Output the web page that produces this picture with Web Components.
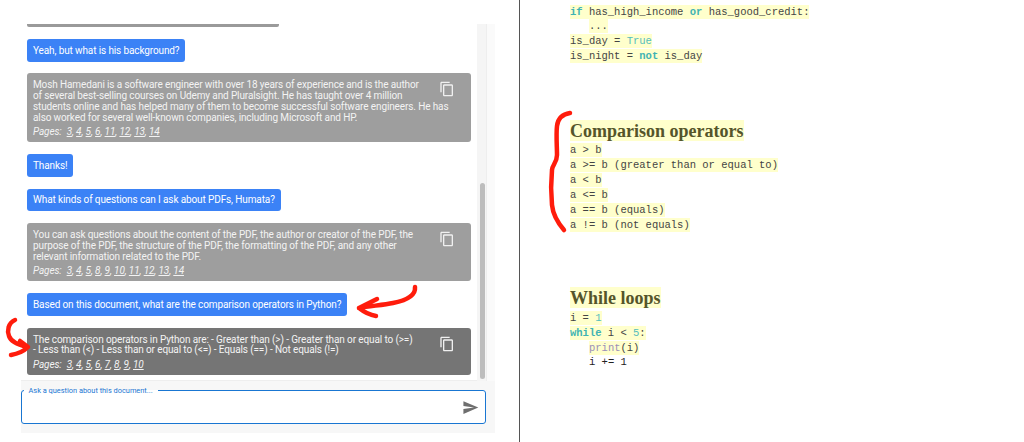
<!DOCTYPE html>
<html><head><meta charset="utf-8">
<style>
html,body{margin:0;padding:0;background:#fff;height:442px;overflow:hidden}
body{display:flex;position:relative;font-family:Roboto,"Liberation Sans",Arial,sans-serif}
</style></head><body>
<chat-pane>
  <chat-msg kind="user">Yeah, but what is his background?</chat-msg>
  <chat-msg kind="bot" pages="3,4,5,6,11,12,13,14">Mosh Hamedani is a software engineer with over 18 years of experience and is the author<br>of several best-selling courses on Udemy and Pluralsight. He has taught over 4 million<br>students online and has helped many of them to become successful software engineers. He has<br>also worked for several well-known companies, including Microsoft and HP.</chat-msg>
  <chat-msg kind="user">Thanks!</chat-msg>
  <chat-msg kind="user">What kinds of questions can I ask about PDFs, Humata?</chat-msg>
  <chat-msg kind="bot" pages="3,4,5,8,9,10,11,12,13,14">You can ask questions about the content of the PDF, the author or creator of the PDF, the<br>purpose of the PDF, the structure of the PDF, the formatting of the PDF, and any other<br>relevant information related to the PDF.</chat-msg>
  <chat-msg kind="user">Based on this document, what are the comparison operators in Python?</chat-msg>
  <chat-msg kind="bot" active pages="3,4,5,6,7,8,9,10">The comparison operators in Python are: - Greater than (&gt;) - Greater than or equal to (&gt;=)<br>- Less than (&lt;) - Less than or equal to (&lt;=) - Equals (==) - Not equals (!=)</chat-msg>
</chat-pane>
<doc-pane>
  <code-block style="margin-top:4.5px">
    <code-line><b class="k">if</b> has_high_income <b class="k">or</b> has_good_credit:</code-line>
    <code-line indent>...</code-line>
    <code-line>is_day = <span class="t">True</span></code-line>
    <code-line>is_night = <b class="k">not</b> is_day</code-line>
  </code-block>
  <doc-heading style="margin-top:56px">Comparison operators</doc-heading>
  <code-block style="margin-top:1.5px">
    <code-line>a &gt; b</code-line>
    <code-line>a &gt;= b (greater than or equal to)</code-line>
    <code-line>a &lt; b</code-line>
    <code-line>a &lt;= b</code-line>
    <code-line>a == b (equals)</code-line>
    <code-line>a != b (not equals)</code-line>
  </code-block>
  <doc-heading style="margin-top:55px">While loops</doc-heading>
  <code-block style="margin-top:1.5px">
    <code-line>i = <span class="t">1</span></code-line>
    <code-line><b class="k">while</b> i &lt; <span class="t">5</span>:</code-line>
    <code-line indent><span class="p">print</span>(i)</code-line>
    <code-line indent plain>i += 1</code-line>
  </code-block>
</doc-pane>
<red-ink></red-ink>
<script>
function def(name, css, html, init){
  customElements.define(name, class extends HTMLElement{
    connectedCallback(){
      if(this.shadowRoot) return;
      const s=this.attachShadow({mode:'open'});
      s.innerHTML='<style>'+css+'</style>'+(typeof html==='function'?html(this):html);
      if(init) init(this,s);
    }
  });
}
def('chat-pane',`
  :host{display:flex;flex-direction:column;box-sizing:border-box;width:520px;height:442px;flex:none;border-right:1px solid #555;padding:24px 24px 0 21px;border-top:0}
  .top{display:flex;height:357px}
  .msgs{width:456px;box-sizing:border-box;padding-left:6px;overflow:hidden;border-bottom:1px solid #eee}
  .stub{width:252px;height:2.5px;background:#9a9a9a;border-radius:0 0 2px 2px;margin-bottom:12.5px}
  .bar{width:18px;display:flex;background:#fafafa}
  .track{width:10px;background:#f5f5f5;box-sizing:border-box;padding:159px 0 2px 3px;border-right:1px solid #eee}
  .thumb{width:5px;height:196px;background:#bdbdbd;border-radius:3px}
  .foot{background:#f7f7f7;height:52px;width:474px;box-sizing:border-box;padding:5px 9px 0 0}
`,`<div class="top"><div class="msgs"><div class="stub"></div><slot></slot></div><div class="bar"><div class="track"><div class="thumb"></div></div></div></div>
<div class="foot"><ask-box></ask-box></div>`);
def('chat-msg',`
  :host{display:block;margin-bottom:11.9px;font:10px/10.75px Roboto,"Liberation Sans",Arial,sans-serif;letter-spacing:-.12px;color:#f3f3f3}
  .b{box-sizing:border-box;border-radius:3px;padding:6px}
  .user{display:inline-block;vertical-align:top;background:#3b82f6;color:#fff;padding:6.6px 6px 5.2px}
  .bot{display:flex;width:444px;background:#9e9e9e;padding:7px 6px 4px;position:relative}
  .active{background:#757575}
  .t{flex:1;white-space:nowrap}
  .pg{font-style:italic;line-height:13px;margin-top:2px;display:flex;gap:5px}
  u{text-underline-offset:1px}
  svg{width:16px;height:16px;fill:#f0f0f0;position:absolute;left:411.7px;top:8px}
`,h=>{
  const bot=h.getAttribute('kind')==='bot';
  if(!bot) return '<div class="b user"><slot></slot></div>';
  const pages=h.getAttribute('pages').split(',');
  const links=pages.map((p,i)=>'<u>'+p+'</u>'+(i<pages.length-1?',':'')).join(' ');
  return '<div class="b bot'+(h.hasAttribute('active')?' active':'')+'"><div class="t"><slot></slot><div class="pg"><span>Pages:</span><div>'+links+'</div></div></div><svg viewBox="0 0 24 24"><path d="M16 1H4c-1.1 0-2 .9-2 2v14h2V3h12V1zm3 4H8c-1.1 0-2 .9-2 2v14c0 1.1.9 2 2 2h11c1.1 0 2-.9 2-2V7c0-1.1-.9-2-2-2zm0 16H8V7h11v14z"/></svg></div>';
});
def('ask-box',`
  :host{display:block}
  fieldset{margin:0;box-sizing:border-box;width:465px;height:38px;border:1.5px solid #1976d2;border-radius:3px;background:#fff;padding:0 6px 0 1.5px;display:flex;justify-content:flex-end;align-items:center}
  legend{font:7.4px/9px Roboto,"Liberation Sans",Arial,sans-serif;color:#1976d2;padding:0 5px;margin-left:0;height:9px}
  svg{width:17px;height:17px;fill:#6e6e6e;display:block;margin-top:-3px}
`,`<fieldset><legend>Ask a question about this document...</legend><svg viewBox="0 0 24 24"><path d="M2.01 21 23 12 2.01 3 2 10l15 2-15 2z"/></svg></fieldset>`);
def('doc-pane',`:host{display:block;padding-left:50px;flex:1}`,`<slot></slot>`);
def('doc-heading',`
  :host{display:block;height:22px;font:bold 18px/22px "Liberation Serif",serif;color:#55552a}
  span{background:#ffffcc;display:inline-block;height:20px;line-height:20px;padding-top:1px}
`,`<span><slot></slot></span>`);
def('code-block',`:host{display:block;font:10.5px/15px "Liberation Mono",monospace;color:#444}`,`<slot></slot>`);
def('code-line',`
  :host{display:block;height:14.85px;white-space:pre}
  :host([indent]){padding-left:19px}
  span{background:#ffffcc;display:inline-block;height:14px;line-height:14px}
  :host([plain]) span{background:none;color:#222}
  ::slotted(.k){color:#3fb3b3}
  ::slotted(.t){color:#55bdbd}
  ::slotted(.p){color:#9a8fb8}
`,`<span><slot></slot></span>`);
def('red-ink',`
  :host{display:block;position:absolute;left:0;top:0;width:1024px;height:442px;pointer-events:none}
  svg{display:block}
  path{fill:none;stroke:#ff1c0c;stroke-linecap:round;stroke-linejoin:round}
`,`<svg width="1024" height="442" viewBox="0 0 1024 442">
  <path stroke-width="4.5" d="M415 287C416 297 403 301 393 303C383 305 370 306 359 308M377 299L359 308C364 312 370 315 376 316"/>
  <path stroke-width="4.5" d="M15 320C8 323 7 331 9 336C11 342 19 345 27 347M11 355C17 354 24 351 28 347L20 341"/>
  <path stroke-width="4.5" d="M570 113C563 114 558 118 557 126C556 134 557 148 557 155C557 163 552 165 552 170C551 180 551 195 552 205C553 215 558 223 564 230"/>
</svg>`);
</script>
</body></html>
